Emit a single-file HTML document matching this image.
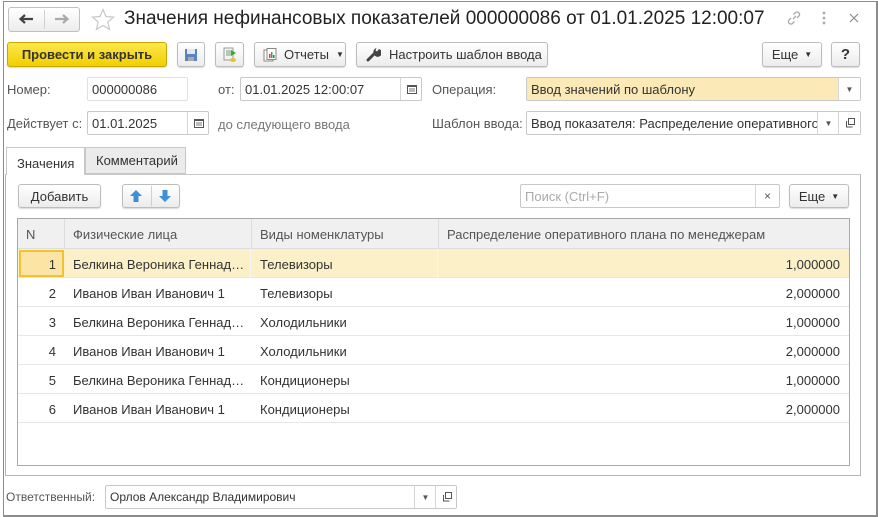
<!DOCTYPE html>
<html><head><meta charset="utf-8"><style>
*{box-sizing:border-box;margin:0;padding:0}
body{width:878px;height:517px;background:#fff;font-family:"Liberation Sans",Arial,sans-serif;font-size:13px;color:#333;position:relative;overflow:hidden}
.a{position:absolute}
.btn{position:absolute;border:1px solid #bdbdbd;border-radius:3px;background:linear-gradient(#fff,#ececec);box-shadow:0 1px 1px rgba(0,0,0,.15);color:#333;display:flex;align-items:center;justify-content:center;font-size:13px}
.inp{position:absolute;border:1px solid #c8c8c8;border-radius:2px;background:#fff;padding-left:4px;display:flex;align-items:center;font-size:13px;color:#333}
.lbl{position:absolute;color:#555;font-size:13px}
.dd{position:absolute;top:0;bottom:0;border-left:1px solid #d6d6d6;display:flex;align-items:center;justify-content:center;font-size:8px;color:#555}
.row{position:absolute;left:18px;width:831px;height:29px;border-bottom:1px solid #e6e6e6}
.c{position:absolute;top:1px;height:28px;line-height:29px;white-space:nowrap}
</style></head><body>
<div class="a" style="left:3px;top:1px;width:875px;height:516px;border:1px solid #8c8c8c;border-right:2px solid #8c8c8c;border-bottom:2px solid #8c8c8c"></div>

<!-- nav -->
<div class="btn" style="left:8px;top:7px;width:72px;height:25px;box-shadow:none;border-color:#c0c0c0"></div>
<div class="a" style="left:44px;top:10px;width:1px;height:19px;background:#d0d0d0"></div>
<svg class="a" style="left:18px;top:13px" width="16" height="12"><path d="M15 6H4M7 2L2.5 6 7 10" stroke="#444" stroke-width="2.2" fill="none"/></svg>
<svg class="a" style="left:54px;top:13px" width="16" height="12"><path d="M1 6H12M9 2l4.5 4L9 10" stroke="#aaa" stroke-width="2.2" fill="none"/></svg>
<svg class="a" style="left:91px;top:8px" width="24" height="23"><path d="M12 1.5l3 7 7.5.6-5.7 4.9 1.8 7.4L12 17.5l-6.6 3.9 1.8-7.4L1.5 9.1 9 8.5z" fill="none" stroke="#c8c8c8" stroke-width="1.2"/></svg>
<div class="a" style="left:124px;top:8px;font-size:19px;color:#222;white-space:nowrap">Значения нефинансовых показателей 000000086 от 01.01.2025 12:00:07</div>
<svg class="a" style="left:786px;top:10px" width="16" height="16"><path d="M7 9l3-3M5 8L3 10a2.5 2.5 0 003.5 3.5L8.5 11.5M11 8l2-2a2.5 2.5 0 00-3.5-3.5L7.5 4.5" stroke="#aaa" stroke-width="1.3" fill="none"/></svg>
<svg class="a" style="left:822px;top:10px" width="4" height="16"><circle cx="2" cy="3" r="1.4" fill="#aaa"/><circle cx="2" cy="8" r="1.4" fill="#aaa"/><circle cx="2" cy="13" r="1.4" fill="#aaa"/></svg>
<svg class="a" style="left:849px;top:13px" width="10" height="10"><path d="M1 1l8 8M9 1l-8 8" stroke="#888" stroke-width="1.1"/></svg>

<!-- toolbar -->
<div class="btn" style="left:7px;top:42px;width:160px;height:25px;background:linear-gradient(#fde74c,#f0d000);border-color:#c9a900;font-weight:bold;color:#333">Провести и закрыть</div>
<div class="btn" style="left:177px;top:42px;width:28px;height:25px"><svg width="14" height="14"><rect x="1" y="1" width="12" height="12" fill="#5a84c0"/><rect x="3" y="1" width="8" height="5" fill="#dfe8f4"/><rect x="4" y="9" width="6" height="4" fill="#aaa"/></svg></div>
<div class="btn" style="left:215px;top:42px;width:29px;height:25px"><svg width="16" height="16"><rect x="2" y="1" width="9" height="12" fill="#f4f4f4" stroke="#999"/><path d="M4 4h5M4 6h5M4 8h5" stroke="#6a6"/><path d="M9 3l5 3-5 3z" fill="#3a3"/><ellipse cx="11" cy="13" rx="3" ry="2" fill="#e8c030"/></svg></div>
<div class="btn" style="left:254px;top:42px;width:92px;height:25px;justify-content:flex-start;padding-left:8px"><svg width="14" height="14"><rect x="1" y="2" width="9" height="11" fill="#fff" stroke="#888"/><rect x="4" y="0.5" width="9" height="11" fill="#fff" stroke="#888"/><rect x="6" y="6" width="1.5" height="4" fill="#d33"/><rect x="8" y="4" width="1.5" height="6" fill="#3a3"/><rect x="10" y="7" width="1.5" height="3" fill="#36c"/></svg><span style="margin-left:7px">Отчеты</span><span style="font-size:8px;margin-left:7px">&#9660;</span></div>
<div class="btn" style="left:356px;top:42px;width:192px;height:25px;justify-content:flex-start;padding-left:9px"><svg width="15" height="15"><path d="M2 13l6-6" stroke="#444" stroke-width="3" stroke-linecap="round"/><path d="M8 7a4 4 0 105-5l-2 2.5-1.5-1 1-2.5A4 4 0 008 7z" fill="#444"/></svg><span style="margin-left:8px">Настроить шаблон ввода</span></div>
<div class="btn" style="left:762px;top:42px;width:60px;height:25px">Еще <span style="font-size:8px;margin-left:6px">&#9660;</span></div>
<div class="btn" style="left:831px;top:42px;width:29px;height:25px;font-weight:bold;font-size:15px">?</div>

<!-- row1 -->
<div class="lbl" style="left:7px;top:82px">Номер:</div>
<div class="inp" style="left:87px;top:77px;width:101px;height:24px;border-color:#e0e0e0">000000086</div>
<div class="lbl" style="left:218px;top:82px">от:</div>
<div class="inp" style="left:240px;top:77px;width:182px;height:24px">01.01.2025 12:00:07<div class="dd" style="left:159px;width:22px"><svg width="10" height="10"><rect x="0.5" y="1.5" width="9" height="8" fill="none" stroke="#555"/><rect x="0.5" y="1" width="9" height="2" fill="#555"/><path d="M2 5h6M2 7h6" stroke="#777"/></svg></div></div>
<div class="lbl" style="left:432px;top:82px">Операция:</div>
<div class="inp" style="left:526px;top:77px;width:335px;height:24px;background:#fce9b8;border-color:#c8c8c8">Ввод значений по шаблону<div class="dd" style="right:0;width:22px;background:#fff">&#9660;</div></div>

<!-- row2 -->
<div class="lbl" style="left:7px;top:116px">Действует с:</div>
<div class="inp" style="left:87px;top:111px;width:122px;height:24px">01.01.2025<div class="dd" style="left:99px;width:22px"><svg width="10" height="10"><rect x="0.5" y="1.5" width="9" height="8" fill="none" stroke="#555"/><rect x="0.5" y="1" width="9" height="2" fill="#555"/><path d="M2 5h6M2 7h6" stroke="#777"/></svg></div></div>
<div class="lbl" style="left:218px;top:117px;color:#777">до следующего ввода</div>
<div class="lbl" style="left:432px;top:116px">Шаблон ввода:</div>
<div class="inp" style="left:526px;top:111px;width:335px;height:24px;overflow:hidden;white-space:nowrap">Ввод показателя: Распределение оперативного<div class="dd" style="left:290px;width:22px;background:#fff">&#9660;</div><div class="dd" style="left:311px;width:23px;background:#fff"><svg width="10" height="10"><rect x="3.5" y="0.5" width="6" height="6" fill="none" stroke="#555"/><path d="M1.5 3v6h6" fill="none" stroke="#555"/></svg></div></div>

<!-- tabs -->
<div class="a" style="left:5px;top:174px;width:856px;height:302px;border:1px solid #b5b5b5;border-top-color:#c8c8c8"></div>
<div class="a" style="left:6px;top:147px;width:79px;height:28px;background:#fff;border:1px solid #c8c8c8;border-bottom:none;padding:8px 0 0 10px;color:#333">Значения</div>
<div class="a" style="left:85px;top:147px;width:101px;height:27px;background:#ebebeb;border:1px solid #c8c8c8;padding:5px 0 0 10px;color:#333">Комментарий</div>

<div class="btn" style="left:18px;top:184px;width:83px;height:24px">Добавить</div>
<div class="btn" style="left:122px;top:184px;width:58px;height:24px"></div>
<div class="a" style="left:151px;top:186px;width:1px;height:20px;background:#d0d0d0"></div>
<svg class="a" style="left:129px;top:189px" width="14" height="14"><path d="M7 1L13 7H9.5V13H4.5V7H1z" fill="#3d8fd8"/></svg>
<svg class="a" style="left:158px;top:189px" width="14" height="14"><path d="M7 13L13 7H9.5V1H4.5V7H1z" fill="#3d8fd8"/></svg>

<div class="inp" style="left:520px;top:184px;width:260px;height:24px;color:#aaa">Поиск (Ctrl+F)<div class="dd" style="right:0;width:24px;font-size:12px;color:#555">&#215;</div></div>
<div class="btn" style="left:789px;top:184px;width:60px;height:24px">Еще <span style="font-size:8px;margin-left:6px">&#9660;</span></div>

<!-- table -->
<div class="a" style="left:17px;top:218px;width:833px;height:248px;border:1px solid #a8a8a8"></div>
<div class="a" style="left:18px;top:219px;width:831px;height:30px;background:#f0f0f0;border-bottom:1px solid #ddd"></div>
<div class="a" style="left:64px;top:219px;width:1px;height:30px;background:#dcdcdc"></div>
<div class="a" style="left:251px;top:219px;width:1px;height:30px;background:#dcdcdc"></div>
<div class="a" style="left:438px;top:219px;width:1px;height:30px;background:#dcdcdc"></div>
<div class="a" style="left:26px;top:227px;color:#555">N</div>
<div class="a" style="left:73px;top:227px;color:#555">Физические лица</div>
<div class="a" style="left:260px;top:227px;color:#555">Виды номенклатуры</div>
<div class="a" style="left:447px;top:227px;color:#555">Распределение оперативного плана по менеджерам</div>

<div class="row" style="top:249px;background:#fcf0c8"><div class="c" style="left:1px;width:45px;height:27px;top:1px;border:2px solid #f0c430;background:#fbe4a4;text-align:right;padding-right:6px;line-height:25px">1</div><div class="c" style="left:46px;width:187px;border-right:1px solid #f6f6f6;padding-left:9px">Белкина Вероника Геннад…</div><div class="c" style="left:233px;width:187px;border-right:1px solid #f6f6f6;padding-left:9px">Телевизоры</div><div class="c" style="right:9px">1,000000</div></div>
<div class="row" style="top:278px"><div class="c" style="left:0;width:38px;text-align:right">2</div><div class="c" style="left:55px">Иванов Иван Иванович 1</div><div class="c" style="left:242px">Телевизоры</div><div class="c" style="right:9px">2,000000</div></div>
<div class="row" style="top:307px"><div class="c" style="left:0;width:38px;text-align:right">3</div><div class="c" style="left:55px">Белкина Вероника Геннад…</div><div class="c" style="left:242px">Холодильники</div><div class="c" style="right:9px">1,000000</div></div>
<div class="row" style="top:336px"><div class="c" style="left:0;width:38px;text-align:right">4</div><div class="c" style="left:55px">Иванов Иван Иванович 1</div><div class="c" style="left:242px">Холодильники</div><div class="c" style="right:9px">2,000000</div></div>
<div class="row" style="top:365px"><div class="c" style="left:0;width:38px;text-align:right">5</div><div class="c" style="left:55px">Белкина Вероника Геннад…</div><div class="c" style="left:242px">Кондиционеры</div><div class="c" style="right:9px">1,000000</div></div>
<div class="row" style="top:394px"><div class="c" style="left:0;width:38px;text-align:right">6</div><div class="c" style="left:55px">Иванов Иван Иванович 1</div><div class="c" style="left:242px">Кондиционеры</div><div class="c" style="right:9px">2,000000</div></div>

<!-- bottom -->
<div class="lbl" style="left:6px;top:490px;font-size:12px">Ответственный:</div>
<div class="inp" style="left:105px;top:485px;width:352px;height:24px;font-size:12px">Орлов Александр Владимирович<div class="dd" style="left:308px;width:22px">&#9660;</div><div class="dd" style="left:329px;width:22px"><svg width="10" height="10"><rect x="3.5" y="0.5" width="6" height="6" fill="none" stroke="#555"/><path d="M1.5 3v6h6" fill="none" stroke="#555"/></svg></div></div>
</body></html>
